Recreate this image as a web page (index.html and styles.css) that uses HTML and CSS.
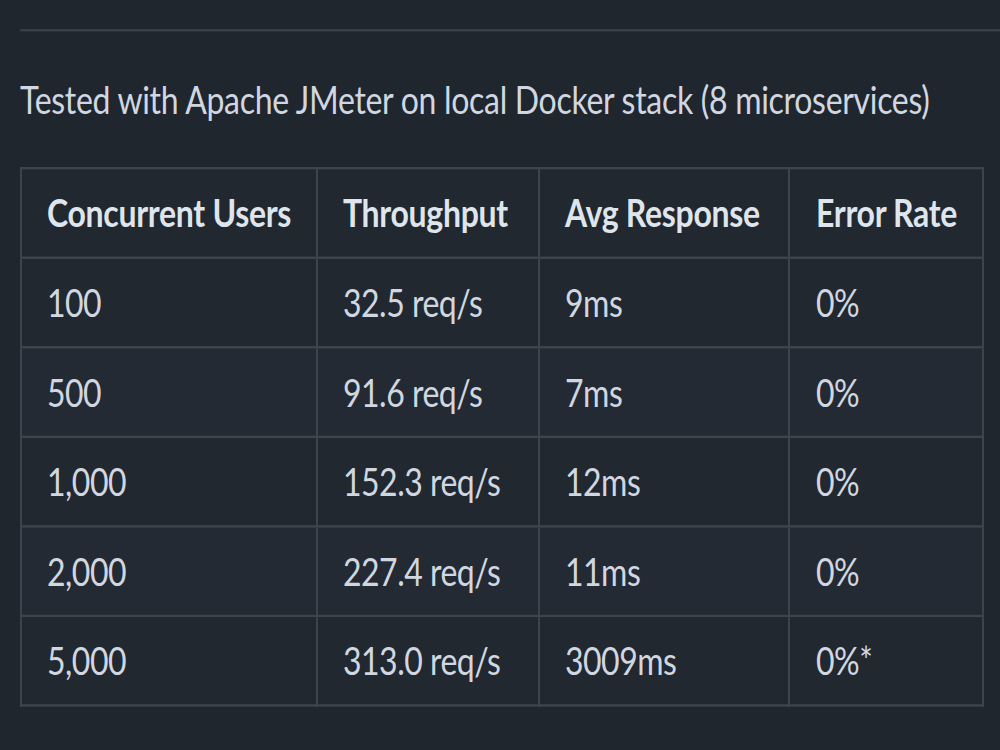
FILE: index.html
```html
<!DOCTYPE html>
<html lang="en">
<head>
    <meta charset="UTF-8">
    <title>Load Test Results</title>
    <link rel="stylesheet" href="styles.css">
</head>
<body>
<div class="readme">
    <div class="section-rule"></div>
    <p>Tested with Apache JMeter on local Docker stack (8 microservices)</p>

    <table class="results">
        <colgroup>
            <col class="col-users">
            <col class="col-throughput">
            <col class="col-response">
            <col class="col-error">
        </colgroup>
        <thead>
        <tr>
            <th>Concurrent Users</th>
            <th>Throughput</th>
            <th>Avg Response</th>
            <th>Error Rate</th>
        </tr>
        </thead>
        <tbody>
        <tr>
            <td>100</td>
            <td>32.5 req/s</td>
            <td>9ms</td>
            <td>0%</td>
        </tr>
        <tr>
            <td>500</td>
            <td>91.6 req/s</td>
            <td>7ms</td>
            <td>0%</td>
        </tr>
        <tr>
            <td>1,000</td>
            <td>152.3 req/s</td>
            <td>12ms</td>
            <td>0%</td>
        </tr>
        <tr>
            <td>2,000</td>
            <td>227.4 req/s</td>
            <td>11ms</td>
            <td>0%</td>
        </tr>
        <tr>
            <td>5,000</td>
            <td>313.0 req/s</td>
            <td>3009ms</td>
            <td>0%*</td>
        </tr>
        </tbody>
    </table>
</div>
</body>
</html>
```
FILE: styles.css
```css
* {
    box-sizing: border-box;
}

html, body {
    height: 100%;
}

body {
    margin: 0;
    background-color: #20262e;
}

/* the screenshot is a zoomed-in readme, so draw it at normal size and scale it up */
.readme {
    width: 500px;
    padding-left: 9.5px;
    transform: scale(2, 2.42);
    transform-origin: 0 0;
    font-family: Lato, "Open Sans", "Liberation Sans", sans-serif;
    font-size: 16px;
    line-height: 1.5;
    letter-spacing: -0.15px;
    color: #d1d7e0;
}

.section-rule {
    height: 12.6px;
    margin-left: 0.5px;
    border-bottom: 1px solid #3a4049;
}

p {
    margin: 16px 0;
    padding-left: 0.5px;
}

.results {
    border-collapse: collapse;
    table-layout: fixed;
    width: 481px;
}

.col-users {
    width: 148px;
}

.col-throughput {
    width: 111px;
}

.col-response {
    width: 125.5px;
}

.col-error {
    width: 96.5px;
}

.results th, .results td {
    padding: 6px 13px;
    border: 1px solid #3d444d;
    text-align: left;
    white-space: nowrap;
}

.results th {
    font-weight: 700;
    color: #dfe5ec;
}

.results td {
    letter-spacing: -0.25px;
}

.results tr {
    background-color: #212830;
}

.results tbody tr:nth-child(2n) {
    background-color: #242a33;
}
```
